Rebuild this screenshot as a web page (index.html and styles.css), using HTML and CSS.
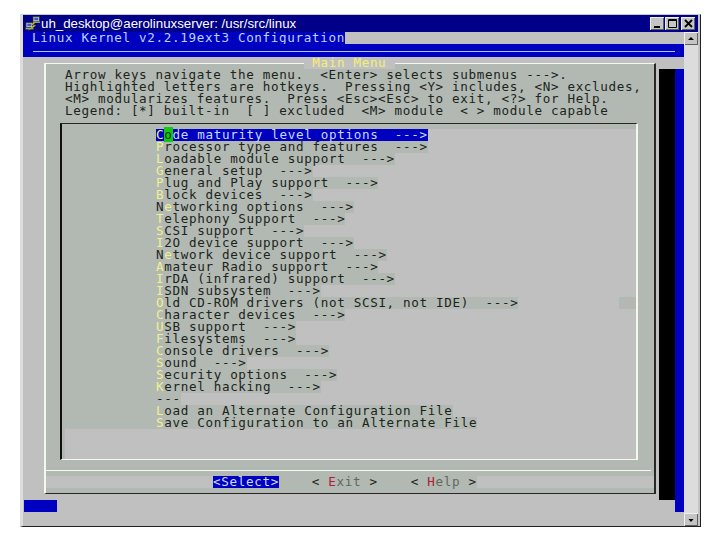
FILE: index.html
```html
<!DOCTYPE html>
<html lang="en">
<head>
<meta charset="utf-8">
<title>uh_desktop@aerolinuxserver: /usr/src/linux</title>
<link rel="stylesheet" href="styles.css">
</head>
<body>
<div class="window">
  <div class="titlebar">
    <svg class="appicon" viewBox="0 0 16 16" width="16" height="16">
      <rect x="8" y="0.5" width="6.5" height="5" fill="#c8c8c8" stroke="#303030" stroke-width="0.8"/>
      <rect x="9.3" y="1.6" width="4" height="2.6" fill="#3060c0"/>
      <rect x="8" y="5.5" width="7" height="1.5" fill="#909090"/>
      <rect x="1" y="6.5" width="6.5" height="5" fill="#c8c8c8" stroke="#303030" stroke-width="0.8"/>
      <rect x="2.3" y="7.6" width="4" height="2.6" fill="#3060c0"/>
      <rect x="0.5" y="11.5" width="8" height="2" fill="#a0a0a0" stroke="#303030" stroke-width="0.5"/>
      <path d="M12 4.5 L6 8.5 L9 9 L3 14.5 L11 9.5 L8 9 Z" fill="#f0e020" stroke="#807000" stroke-width="0.3"/>
    </svg>
    <span class="title-text">uh_desktop@aerolinuxserver: /usr/src/linux</span>
    <div class="winbtns">
      <span class="winbtn"><svg viewBox="0 0 13 13" width="13" height="13"><rect x="3" y="9" width="6" height="2" fill="#000"/></svg></span>
      <span class="winbtn"><svg viewBox="0 0 13 13" width="13" height="13"><path d="M2.5 2.500h8v8h-8z M2.500 3.500h8" fill="none" stroke="#000"/></svg></span>
      <span class="winbtn winbtn-close"><svg viewBox="0 0 13 13" width="13" height="13"><path d="M3 3l7 7M10 3l-7 7" fill="none" stroke="#000" stroke-width="1.8"/></svg></span>
    </div>
  </div>
  <div class="client">
    <div class="term">
      <div class="head-row"><span class="head-title">Linux Kernel v2.2.19ext3 Configuration</span></div>
      <div class="head-rule"><div class="head-line"></div></div>
      <div class="stage">
        <div class="dialog">
          <div class="dlg-title">&nbsp;Main Menu&nbsp;</div>
          <div class="help">Arrow keys navigate the menu.  &lt;Enter&gt; selects submenus ---&gt;.
Highlighted letters are hotkeys.  Pressing &lt;Y&gt; includes, &lt;N&gt; excludes,
&lt;M&gt; modularizes features.  Press &lt;Esc&gt;&lt;Esc&gt; to exit, &lt;?&gt; for Help.
Legend: [*] built-in  [ ] excluded  &lt;M&gt; module  &lt; &gt; module capable</div>
          <div class="listbox">
            <div class="row"><div class="item item-sel"><b class="hk-sel">C</b><b class="cursor">o</b>de maturity level options  ---&gt;</div></div>
            <div class="row"><div class="item"><b class="hk">P</b>rocessor type and features  ---&gt;</div></div>
            <div class="row"><div class="item"><b class="hk">L</b>oadable module support  ---&gt;</div></div>
            <div class="row"><div class="item"><b class="hk">G</b>eneral setup  ---&gt;</div></div>
            <div class="row"><div class="item"><b class="hk">P</b>lug and Play support  ---&gt;</div></div>
            <div class="row"><div class="item"><b class="hk">B</b>lock devices  ---&gt;</div></div>
            <div class="row"><div class="item">N<b class="hk">e</b>tworking options  ---&gt;</div></div>
            <div class="row"><div class="item"><b class="hk">T</b>elephony Support  ---&gt;</div></div>
            <div class="row"><div class="item"><b class="hk">S</b>CSI support  ---&gt;</div></div>
            <div class="row"><div class="item"><b class="hk">I</b>2O device support  ---&gt;</div></div>
            <div class="row"><div class="item">N<b class="hk">e</b>twork device support  ---&gt;</div></div>
            <div class="row"><div class="item"><b class="hk">A</b>mateur Radio support  ---&gt;</div></div>
            <div class="row"><div class="item"><b class="hk">I</b>rDA (infrared) support  ---&gt;</div></div>
            <div class="row"><div class="item"><b class="hk">I</b>SDN subsystem  ---&gt;</div></div>
            <div class="row row-patch"><div class="item"><b class="hk">O</b>ld CD-ROM drivers (not SCSI, not IDE)  ---&gt;</div></div>
            <div class="row"><div class="item"><b class="hk">C</b>haracter devices  ---&gt;</div></div>
            <div class="row"><div class="item"><b class="hk">U</b>SB support  ---&gt;</div></div>
            <div class="row"><div class="item"><b class="hk">F</b>ilesystems  ---&gt;</div></div>
            <div class="row"><div class="item"><b class="hk">C</b>onsole drivers  ---&gt;</div></div>
            <div class="row"><div class="item"><b class="hk">S</b>ound  ---&gt;</div></div>
            <div class="row"><div class="item"><b class="hk">S</b>ecurity options  ---&gt;</div></div>
            <div class="row"><div class="item"><b class="hk">K</b>ernel hacking  ---&gt;</div></div>
            <div class="row"><div class="item">---</div></div>
            <div class="row"><div class="item"><b class="hk">L</b>oad an Alternate Configuration File</div></div>
            <div class="row"><div class="item"><b class="hk">S</b>ave Configuration to an Alternate File</div></div>
            <div class="list-fill"></div>
          </div>
          <div class="sep"></div>
          <div class="buttons"><span class="btn-sel">&lt;Select&gt;</span><span class="btn-rest">    &lt; <b class="btn-hk">E</b><span class="btn-dim">xit</span> &gt;    &lt; <b class="btn-hk">H</b><span class="btn-dim">elp</span> &gt;</span></div>
        </div>
        <div class="shadow"></div>
        <div class="shadow-blue"></div>
        <div class="bluebar"></div>
      </div>
    </div>
    <div class="scrollbar">
      <span class="sb-btn"><svg viewBox="0 0 14 13" width="14" height="13"><path d="M4 8h6L7 5z" fill="#000"/></svg></span>
      <div class="sb-track"></div>
      <span class="sb-btn"><svg viewBox="0 0 14 13" width="14" height="13"><path d="M4.500 6h5L7 9z" fill="#000"/></svg></span>
    </div>
  </div>
</div>
</body>
</html>
```
FILE: styles.css
```css
html, body {
  margin: 0;
  padding: 0;
  background: #fff;
  overflow: hidden;
}
body {
  width: 720px;
  height: 540px;
  padding: 14px 0 0 20px;
  box-sizing: border-box;
}
.window {
  width: 681px;
  height: 513px;
  box-sizing: border-box;
  background: #c4c4c4;
  border-top: 1px solid #c8c8c8;
  border-left: 3px solid #dcdcdc;
  border-right: 1px solid #202020;
  border-bottom: 1px solid #202020;
  padding-right: 2px;
  display: flex;
  flex-direction: column;
}
.titlebar {
  height: 17px;
  background: #000088;
  display: flex;
  align-items: center;
  padding-left: 2px;
  flex: none;
}
.appicon {
  flex: none;
}
.title-text {
  font: 13.3px/17px "Liberation Sans", Arial, sans-serif;
  color: #fff;
  white-space: pre;
  flex: 1;
}
.winbtns {
  display: flex;
  gap: 1px;
  margin-right: 3px;
}
.winbtn {
  width: 14px;
  height: 13px;
  background: #c4c4c4;
  box-shadow: inset 1px 1px 0 #f0f0f0, inset -1px -1px 0 #606060;
  display: flex;
  align-items: center;
  justify-content: center;
}
.winbtn-close {
  margin-left: 1px;
}
.client {
  flex: 1;
  display: flex;
  min-height: 0;
}
.term {
  width: 661px;
  flex: none;
  display: flex;
  flex-direction: column;
  background: #c0c0c0;
  font: 12.6px/12px "DejaVu Sans Mono", "Liberation Mono", monospace;
  letter-spacing: 0.654px;
  color: #1c241c;
}
.head-row {
  height: 12px;
  display: flex;
}
.head-title {
  background: #0000c0;
  color: #b8d4ff;
  padding-left: 9px;
  width: 313px;
  white-space: pre;
}
.head-rule {
  height: 13px;
  background: #0000c0;
  padding: 7px 9px 0 10px;
  box-sizing: border-box;
}
.head-line {
  height: 1px;
  background: #a8c8ff;
}
.stage {
  flex: 1;
  display: grid;
  grid-template-columns: 21px 13px 599px 3px 16px 9px;
  grid-template-rows: 6px 6px 425px 6px 12px 1fr;
}
.dialog {
  grid-column: 2 / 4;
  grid-row: 2 / 4;
  position: relative;
  box-sizing: border-box;
  background: #b2b9b2;
  border-top: 1px solid #f4f8f0;
  border-left: 2px solid #f4f8f0;
  border-right: 2px solid #282828;
  border-bottom: 1px solid #282828;
  padding-top: 5px;
  display: flex;
  flex-direction: column;
}
.dlg-title {
  position: absolute;
  top: -7px;
  left: 258px;
  background: #c0c0c0;
  color: #f4f070;
}
.help {
  height: 48px;
  padding-left: 19px;
  flex: none;
  white-space: pre;
}
.listbox {
  height: 337px;
  margin: 6px 16px 0 14px;
  box-sizing: border-box;
  background: #b2b9b2;
  border-top: 1px solid #282828;
  border-left: 2px solid #101010;
  border-right: 2px solid #f4f8f0;
  border-bottom: 1px solid #f4f8f0;
  padding-top: 5px;
  flex: none;
}
.row {
  height: 12px;
  background: linear-gradient(to right, #b2b9b2 94px, #c0c0c0 94px);
}
.row-patch {
  background: linear-gradient(to right, #b2b9b2 94px, #c0c0c0 94px, #c0c0c0 557px, #b2b9b2 557px);
}
.item {
  width: fit-content;
  margin-left: 94px;
  background: #b2b9b2;
  white-space: pre;
}
.item b, .buttons b {
  font-weight: normal;
}
.hk {
  color: #f0f090;
}
.item-sel {
  background: #0000c0;
  color: #c8d8ff;
}
.hk-sel {
  color: #f0f080;
}
.cursor {
  background: #10c810;
  color: #083008;
}
.list-fill {
  height: 30px;
  background: #c0c0c0;
  margin-left: 3px;
}
.sep {
  height: 1px;
  margin-top: 10px;
  margin-right: 3px;
  background: #f4f8f0;
  flex: none;
}
.buttons {
  height: 12px;
  margin: 5px 0;
  padding-left: 167px;
  background: #c0c0c0;
  display: flex;
  flex: none;
}
.btn-sel {
  background: #0000c0;
  color: #d0dcff;
}
.btn-rest {
  background: #b2b9b2;
  white-space: pre;
}
.btn-hk {
  color: #b02030;
}
.btn-dim {
  color: #606860;
}
.shadow {
  grid-column: 5;
  grid-row: 3 / 5;
  background: #000;
}
.shadow-blue {
  grid-column: 6;
  grid-row: 3 / 6;
  background: #0000c0;
}
.bluebar {
  grid-column: 1 / 3;
  grid-row: 5;
  margin-left: 1px;
  background: #0000c0;
}
.scrollbar {
  flex: 1;
  display: flex;
  flex-direction: column;
  background: #dcdcdc;
}
.sb-btn {
  height: 13px;
  flex: none;
  background: #c4c4c4;
  box-shadow: inset 1px 1px 0 #f0f0f0, inset -1px -1px 0 #606060;
  display: flex;
}
.sb-track {
  flex: 1;
}
```
